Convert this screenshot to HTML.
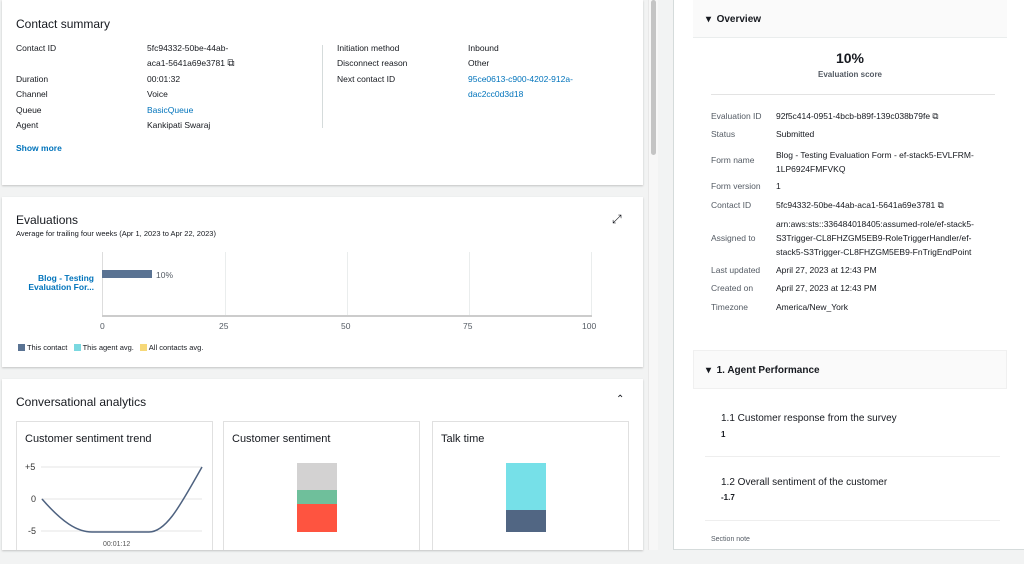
<!DOCTYPE html>
<html><head><meta charset="utf-8"><style>
*{margin:0;padding:0;box-sizing:border-box}
body{width:1024px;height:564px;background:#f2f3f3;font-family:"Liberation Sans",sans-serif;color:#16191f;position:relative;overflow:hidden;font-size:8.5px}
.a{position:absolute;white-space:nowrap}
.card{position:absolute;left:2px;width:641px;background:#fff;box-shadow:0 1px 2px rgba(0,0,0,.2)}
.lk{color:#0073bb}
.b{font-weight:bold}
.g{color:#545b64}
.h{font-size:12px;color:#16191f}
</style></head><body>
<!-- card1 -->
<div class="card" style="top:0;height:185px">
<div class="a h" style="left:14px;top:17px">Contact summary</div>
<div class="a" style="left:14px;top:43px">Contact ID</div>
<div class="a" style="left:145px;top:43px">5fc94332-50be-44ab-</div>
<div class="a" style="left:145px;top:58px">aca1-5641a69e3781 <span style="font-size:10px">⧉</span></div>
<div class="a" style="left:14px;top:74px">Duration</div><div class="a" style="left:145px;top:74px">00:01:32</div>
<div class="a" style="left:14px;top:89px">Channel</div><div class="a" style="left:145px;top:89px">Voice</div>
<div class="a" style="left:14px;top:105px">Queue</div><div class="a lk" style="left:145px;top:105px">BasicQueue</div>
<div class="a" style="left:14px;top:120px">Agent</div><div class="a" style="left:145px;top:120px">Kankipati Swaraj</div>
<div class="a lk b" style="left:14px;top:143px">Show more</div>
<div class="a" style="left:320px;top:45px;width:1px;height:83px;background:#d5dbdb"></div>
<div class="a" style="left:335px;top:43px">Initiation method</div><div class="a" style="left:466px;top:43px">Inbound</div>
<div class="a" style="left:335px;top:58px">Disconnect reason</div><div class="a" style="left:466px;top:58px">Other</div>
<div class="a" style="left:335px;top:74px">Next contact ID</div><div class="a lk" style="left:466px;top:74px">95ce0613-c900-4202-912a-</div>
<div class="a lk" style="left:466px;top:89px">dac2cc0d3d18</div>
</div>
<!-- card2 -->
<div class="card" style="top:197px;height:170px">
<div class="a h" style="left:14px;top:16px">Evaluations</div>
<div class="a" style="left:14px;top:32px;font-size:7.5px">Average for trailing four weeks (Apr 1, 2023 to Apr 22, 2023)</div>
<div class="a" style="left:610px;top:15px;font-size:12px">⤢</div>
<div class="a lk b" style="left:20px;top:77px;width:72px;text-align:right;white-space:normal;line-height:9px">Blog - Testing Evaluation For...</div>
<div class="a" style="left:100px;top:55px;width:1px;height:64px;background:#ddd"></div>
<div class="a" style="left:223px;top:55px;width:1px;height:64px;background:#eaeded"></div>
<div class="a" style="left:345px;top:55px;width:1px;height:64px;background:#eaeded"></div>
<div class="a" style="left:467px;top:55px;width:1px;height:64px;background:#eaeded"></div>
<div class="a" style="left:589px;top:55px;width:1px;height:64px;background:#eaeded"></div>
<div class="a" style="left:100px;top:118px;width:490px;height:2px;background:#ccc"></div>
<div class="a" style="left:100px;top:73px;width:50px;height:8px;background:#5a7393"></div>
<div class="a g" style="left:154px;top:73px">10%</div>
<div class="a g" style="left:98px;top:124px">0</div><div class="a g" style="left:217px;top:124px">25</div><div class="a g" style="left:339px;top:124px">50</div><div class="a g" style="left:461px;top:124px">75</div><div class="a g" style="left:580px;top:124px">100</div>
<div class="a" style="left:16px;top:146px;font-size:7.5px"><span style="display:inline-block;width:7px;height:7px;background:#5a7393;vertical-align:-1px"></span> This contact &nbsp; <span style="display:inline-block;width:7px;height:7px;background:#7ad8e0;vertical-align:-1px"></span> This agent avg. &nbsp; <span style="display:inline-block;width:7px;height:7px;background:#f6d878;vertical-align:-1px"></span> All contacts avg.</div>
</div>
<!-- card3 -->
<div class="card" style="top:379px;height:171px;overflow:hidden">
<div class="a h" style="left:14px;top:16px">Conversational analytics</div>
<div class="a" style="left:614px;top:15px;font-size:10px">⌃</div>
<div class="a" style="left:14px;top:42px;width:197px;height:140px;border:1px solid #e0e0e0">
<div class="a h" style="left:8px;top:11px;font-size:11px">Customer sentiment trend</div>
<svg class="a" style="left:0;top:0" width="197" height="140"><g stroke="#e4e4e4"><line x1="24" y1="45" x2="185" y2="45"/><line x1="24" y1="77" x2="185" y2="77"/><line x1="24" y1="109" x2="185" y2="109"/></g><path d="M25 77 C45 100 60 110 75 110 L132 110 C150 110 165 80 185 45" fill="none" stroke="#4e6280" stroke-width="1.5"/><text x="8" y="48" font-size="9" fill="#333" font-family="Liberation Sans">+5</text><text x="14" y="80" font-size="9" fill="#333" font-family="Liberation Sans">0</text><text x="11" y="112" font-size="9" fill="#333" font-family="Liberation Sans">-5</text><text x="86" y="124" font-size="7" fill="#555" font-family="Liberation Sans">00:01:12</text></svg>
</div>
<div class="a" style="left:221px;top:42px;width:197px;height:140px;border:1px solid #e0e0e0">
<div class="a h" style="left:8px;top:11px;font-size:11px">Customer sentiment</div>
<div class="a" style="left:73px;top:41px;width:40px;height:27px;background:#d3d2d2"></div>
<div class="a" style="left:73px;top:68px;width:40px;height:14px;background:#6fbf9b"></div>
<div class="a" style="left:73px;top:82px;width:40px;height:28px;background:#fe5440"></div>
</div>
<div class="a" style="left:430px;top:42px;width:197px;height:140px;border:1px solid #e0e0e0">
<div class="a h" style="left:8px;top:11px;font-size:11px">Talk time</div>
<div class="a" style="left:73px;top:41px;width:40px;height:47px;background:#76e0e8"></div>
<div class="a" style="left:73px;top:88px;width:40px;height:22px;background:#516683"></div>
</div>
</div>
<!-- scrollbar -->
<div class="a" style="left:648px;top:0;width:10px;height:550px;background:#f7f7f7;border-left:1px solid #e8e8e8"></div>
<div class="a" style="left:651px;top:0;width:5px;height:155px;background:#c4c4c4;border-radius:3px"></div>
<div class="a" style="left:677px;top:233px;font-size:8px;color:#555">||</div>
<!-- right panel -->
<div class="a" style="left:673px;top:0;width:351px;height:550px;background:#fff;border-left:1px solid #d5dbdb;border-bottom:1px solid #d5dbdb"></div>
<div class="a" style="left:693px;top:0;width:314px;height:38px;background:#fafafa;border-bottom:1px solid #eaeded"></div>
<div class="a b" style="left:706px;top:14px;font-size:10px">▾&nbsp; Overview</div>
<div class="a b" style="left:693px;top:50px;width:314px;text-align:center;font-size:14px">10%</div>
<div class="a b g" style="left:693px;top:70px;width:314px;text-align:center;font-size:8px">Evaluation score</div>
<div class="a" style="left:711px;top:94px;width:284px;height:1px;background:#e3e3e3"></div>
<div class="a g" style="left:711px;top:111px">Evaluation ID</div><div class="a" style="left:776px;top:111px">92f5c414-0951-4bcb-b89f-139c038b79fe ⧉</div>
<div class="a g" style="left:711px;top:129px">Status</div><div class="a" style="left:776px;top:129px">Submitted</div>
<div class="a g" style="left:711px;top:155px">Form name</div><div class="a" style="left:776px;top:148px;line-height:14px">Blog - Testing Evaluation Form - ef-stack5-EVLFRM-<br>1LP6924FMFVKQ</div>
<div class="a g" style="left:711px;top:181px">Form version</div><div class="a" style="left:776px;top:181px">1</div>
<div class="a g" style="left:711px;top:200px">Contact ID</div><div class="a" style="left:776px;top:200px">5fc94332-50be-44ab-aca1-5641a69e3781 ⧉</div>
<div class="a g" style="left:711px;top:233px">Assigned to</div><div class="a" style="left:776px;top:217px;line-height:14px">arn:aws:sts::336484018405:assumed-role/ef-stack5-<br>S3Trigger-CL8FHZGM5EB9-RoleTriggerHandler/ef-<br>stack5-S3Trigger-CL8FHZGM5EB9-FnTrigEndPoint</div>
<div class="a g" style="left:711px;top:265px">Last updated</div><div class="a" style="left:776px;top:265px">April 27, 2023 at 12:43 PM</div>
<div class="a g" style="left:711px;top:283px">Created on</div><div class="a" style="left:776px;top:283px">April 27, 2023 at 12:43 PM</div>
<div class="a g" style="left:711px;top:302px">Timezone</div><div class="a" style="left:776px;top:302px">America/New_York</div>
<div class="a" style="left:693px;top:350px;width:314px;height:39px;background:#fafafa;border:1px solid #f0f0f0"></div>
<div class="a b" style="left:706px;top:365px;font-size:10px">▾&nbsp; 1. Agent Performance</div>
<div class="a" style="left:721px;top:413px;font-size:10px">1.1 Customer response from the survey</div>
<div class="a b" style="left:721px;top:430px;font-size:8px">1</div>
<div class="a" style="left:705px;top:456px;width:295px;height:1px;background:#eee"></div>
<div class="a" style="left:721px;top:477px;font-size:10px">1.2 Overall sentiment of the customer</div>
<div class="a b" style="left:721px;top:493px;font-size:8px">-1.7</div>
<div class="a" style="left:705px;top:520px;width:295px;height:1px;background:#eee"></div>
<div class="a g" style="left:711px;top:536px;font-size:7px">Section note</div>
</body></html>
